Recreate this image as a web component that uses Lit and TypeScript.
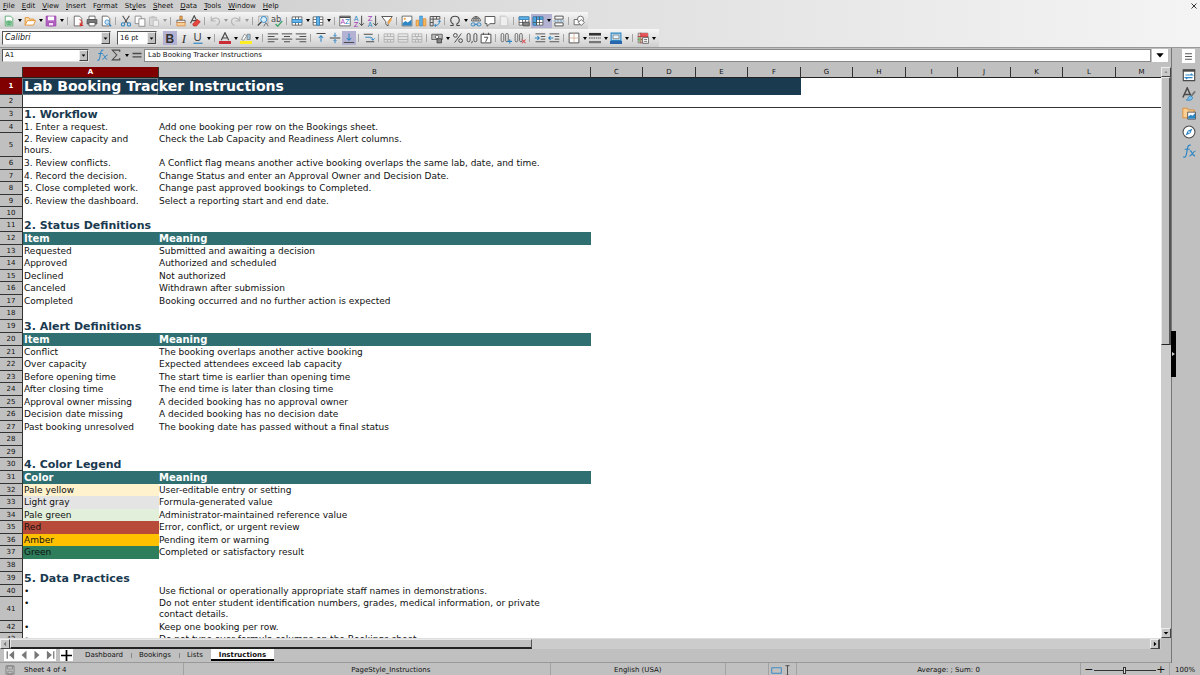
import { LitElement, html, svg, css, nothing } from "lit";
import { customElement, property, state } from "lit/decorators.js";
import { classMap } from "lit/directives/class-map.js";

const G = "#4a4a4a";
const B = "#2f86c4";

const sheetPage = svg`<path d="M3 1.5h7l3 3v10H3z" fill="#fff" stroke=${G}/>`;
const gridBase = svg`<path d="M1.5 2.5h13v11h-13z" fill="#fff" stroke=${G}/><path d="M1.5 6h13M1.5 10h13M6 2.5v11M10 2.5v11" stroke=${G} fill="none"/>`;
const mergeBase = svg`<path d="M1.5 2.5h13v11h-13zM1.5 6h13M1.5 10h13M6 2.5v3.5M10 2.5v3.5M6 10v3.5M10 10v3.5" fill="none" stroke="#a8a8a8"/>`;

const ICONS: Record<string, unknown> = {
  new: svg`<path d="M3 1.5h7l3 3v10H3z" fill="#fff" stroke="#3a9a56"/><path d="M5 8h6v5H5zM5 10.5h6M8 8v5" fill="#bfe5c9" stroke="#2f9a50"/>`,
  open: svg`<path d="M1.5 13.5v-10h5l1 2h5.500v2" fill="#fbe0b4" stroke="#e59434" stroke-width="1.3"/><path d="M1.500 13.500l3-6h11l-3 6z" fill="#fff" stroke="#e59434" stroke-width="1.300"/>`,
  save: svg`<path d="M1.500 1.500h13v13h-13z" fill="#b565c4" stroke="#9637a8"/><path d="M4 2h8v5H4z" fill="#fff"/><path d="M4.500 10h7v4.500h-7z" fill="#f3dff6" stroke="#9637a8"/>`,
  pdf: svg`${sheetPage}<path d="M10 6c4 1 5 6 1 8M11 10v4h4" fill="none" stroke="#d6352f" stroke-width="1.500"/>`,
  print: svg`<path d="M4 1.500h8v5H4z" fill="#fff" stroke=${G}/><path d="M1.500 6h13v6h-13z" fill="#777" stroke=${G}/><path d="M4 10h8v4.500H4z" fill="#fff" stroke=${G}/>`,
  preview: svg`${sheetPage}<circle cx="9.500" cy="9.500" r="3" fill="#cde6f7" stroke=${B}/><path d="M12 12l3 3" stroke=${B} stroke-width="1.500"/>`,
  cut: svg`<path d="M3.500 1l6.500 10M12.500 1L6 11" stroke=${G} stroke-width="1.400"/><circle cx="4" cy="12.500" r="2.200" fill="none" stroke=${B} stroke-width="1.400"/><circle cx="12" cy="12.500" r="2.200" fill="none" stroke=${B} stroke-width="1.400"/>`,
  copy: svg`<path d="M1.500 1.500h8v10h-8z" fill="#fff" stroke="#777"/><path d="M6.500 5h8v10h-8z" fill="#fff" stroke="#777"/>`,
  paste: svg`<path d="M2 3h9v11H2z" fill="#d8d8d8" stroke="#b0b0b0"/><path d="M4.500 1.500h4v3h-4z" fill="#c4c4c4"/><path d="M7 7h7v8H7z" fill="#eee" stroke="#b5b5b5"/>`,
  clone: svg`<path d="M6.500 1.500h3v5h-3z" fill="#f5b05c" stroke="#a8682c"/><path d="M2.500 7h11v3h-11z" fill="#eee" stroke=${G}/><path d="M2.500 10h11v4.500h-11z" fill="#f8cf9c" stroke="#d9873a"/>`,
  clear: svg`<path d="M2 11L7 1l4 8M4.500 7.500h5" fill="none" stroke=${G} stroke-width="1.500"/><path d="M5 12l6-6 4 3-5 5.500H6z" fill="#e8493f" stroke="#b52a22"/>`,
  undo: svg`<path d="M3 2v6h6M3 8c3-6 11-5 11 1 0 3-2 4-4 5" fill="none" stroke="#b4b4b4" stroke-width="1.500"/>`,
  redo: svg`<path d="M13 2v6H7M13 8C10 2 2 3 2 9c0 3 2 4 4 5" fill="none" stroke="#b4b4b4" stroke-width="1.500"/>`,
  find: svg`<path d="M2.500 10V1.500h12V12" fill="#fff" stroke="#888"/><circle cx="9" cy="6" r="4" fill="#d8ecfa" stroke=${B} stroke-width="1.300"/><path d="M6 9l-5 5" stroke=${G} stroke-width="2"/><path d="M9 15l3-5 3 5" fill="none" stroke=${G}/>`,
  spell: svg`<text x="0" y="9" font-size="11" font-family="DejaVu Sans" fill=${G}>ab</text><path d="M6 12l3 3 6-7" fill="none" stroke="#36a265" stroke-width="1.600"/>`,
  row: svg`${gridBase}<path d="M1.500 6h13v4h-13z" fill="#62b5ea" stroke=${B}/>`,
  col: svg`${gridBase}<path d="M6 2.500h4v11H6z" fill="#62b5ea" stroke=${B}/>`,
  sort: svg`<path d="M1 1.500h14v13H1z" fill="#fff" stroke=${G}/><path d="M1 3h14" stroke=${G} stroke-width="2"/><text x="2" y="12.500" font-size="9" font-family="DejaVu Sans" fill="#a33bb5">A</text><text x="8" y="12.500" font-size="9" font-family="DejaVu Sans" fill=${B}>Z</text>`,
  asc: svg`<text x="1" y="7.500" font-size="9" font-family="DejaVu Sans" fill=${B}>A</text><text x="1" y="15.500" font-size="9" font-family="DejaVu Sans" fill="#a33bb5">Z</text><path d="M11.500 1v13M8.500 11l3 3 3-3" fill="none" stroke=${G} stroke-width="1.300"/>`,
  desc: svg`<text x="1" y="7.500" font-size="9" font-family="DejaVu Sans" fill="#a33bb5">Z</text><text x="1" y="15.500" font-size="9" font-family="DejaVu Sans" fill=${B}>A</text><path d="M11.500 1v13M8.500 11l3 3 3-3" fill="none" stroke=${G} stroke-width="1.300"/>`,
  filter: svg`<path d="M1 2h14L9.500 9v5.500l-3-2V9z" fill="#fff" stroke=${G} stroke-width="1.200"/><path d="M9 9l5-6v4l-4 6z" fill="#f2a44b"/>`,
  image: svg`<path d="M1.500 1.500h13v13h-13z" fill="#fff" stroke=${G}/><path d="M2 14v-3l4-3 3 2 5-4v8z" fill=${B}/><circle cx="5" cy="5" r="1.500" fill="#f2a44b"/>`,
  chart: svg`<path d="M1.500 7h3.500v7.500H1.500z" fill="#f5b862" stroke="#e08a2a"/><path d="M6.300 1.500h3.500v13H6.300z" fill="#62b5ea" stroke=${B}/><path d="M11 5h3.500v9.500H11z" fill="#f5b862" stroke="#e08a2a"/>`,
  pivot: svg`<path d="M1.500 2h13M1.500 5.500h13M1.500 2v12.500h4V2M10 2v3.500M14.500 2v3.500M1.500 10h4" fill="none" stroke=${G} stroke-width="1.200"/><path d="M8 14c4 0 6-2 6-6M12 9l2-2 1.500 2M9 12l-2 2 2 1.500" fill="none" stroke=${B} stroke-width="1.300"/>`,
  omega: svg`<path d="M1.500 14h4v-2C0 8 2 1.800 8 1.800S16 8 10.500 12v2h4" fill="none" stroke=${G} stroke-width="1.400"/>`,
  link: svg`<path d="M2 8a6 6 0 0 1 12 0zM8 2v6M5 8c0-3 1-5 3-6 2 1 3 3 3 6M3 5h10" fill="none" stroke=${G}/><rect x="1.500" y="10.500" width="5.500" height="4" rx="2" fill="none" stroke=${B} stroke-width="1.300"/><rect x="9" y="10.500" width="5.500" height="4" rx="2" fill="none" stroke=${B} stroke-width="1.300"/><path d="M5 12.500h6" stroke=${B}/>`,
  comment: svg`<path d="M1.500 2h13v9.500H8L4 15v-3.500H1.500z" fill="#fff" stroke=${G} stroke-width="1.200"/>`,
  header: svg`<path d="M3 1.500h7l3 3v10H3z" fill="#eee" stroke="#bbb"/>`,
  area: svg`${gridBase}<path d="M1.500 2.500h13V6h-13z" fill="#62b5ea" stroke=${B}/><path d="M7 9.500h8v5H7z" fill="#888" stroke=${G}/>`,
  freeze: svg`${gridBase}<path d="M1.500 2.500h13V6H6v7.500H1.500z" fill="#4fa7e2" stroke=${B}/><path d="M6 2.500v11M10 2.500v4M1.500 10H6" stroke=${G}/>`,
  split: svg`<path d="M2.500 1.500h11v4h-11zM2.500 10.500h11v4h-11z" fill="#fff" stroke=${G} stroke-width="1.200"/><path d="M1 8h14" stroke=${B} stroke-dasharray="3 1"/>`,
  shapes: svg`<path d="M1.500 6h7v7h-7z" fill="#fff" stroke=${G}/><circle cx="10" cy="5.500" r="4" fill="#fff" stroke=${G}/><path d="M11 6l4 4-4 4-4-4z" fill="#fff" stroke=${G}/>`,
  bold: svg`<text x="2" y="14" font-size="16" font-weight="bold" font-family="Liberation Sans" fill="#333">B</text>`,
  italic: svg`<text x="5" y="14" font-size="17" font-style="italic" font-family="Liberation Serif" fill="#333">I</text>`,
  underline: svg`<text x="2" y="12" font-size="15" font-family="Liberation Sans" fill="#444">U</text><path d="M2 15h12" stroke=${B} stroke-width="1.600"/>`,
  color: svg`<path d="M3 11L8 1l5 10M5 8h6" fill="none" stroke=${G} stroke-width="1.600"/><path d="M0 12h16v4H0z" fill="#c92d35"/>`,
  highlight: svg`<path d="M2 10l4-7 3 2-4 6z" fill="#fff" stroke="#777"/><path d="M9.500 3h4v7h-4z" fill="#9cc6e2" stroke="#777"/><path d="M0 12h16v4H0z" fill="#ffee22"/>`,
  left: svg`<path d="M1 2.500h14M1 6h9M1 9.500h14M1 13h9" stroke=${G} stroke-width="1.300"/>`,
  center: svg`<path d="M1 2.500h14M4 6h8M1 9.500h14M4 13h8" stroke=${G} stroke-width="1.300"/>`,
  right: svg`<path d="M1 2.500h14M6 6h9M1 9.500h14M6 13h9" stroke=${G} stroke-width="1.300"/>`,
  top: svg`<path d="M2 2h12" stroke=${G} stroke-width="1.400"/><path d="M8 13V5M5 8l3-3 3 3" fill="none" stroke=${B} stroke-width="1.400"/>`,
  middle: svg`<path d="M1 8h14" stroke=${G} stroke-width="1.400"/><path d="M8 1v5M6 4l2 2 2-2M8 15v-5M6 12l2-2 2 2" fill="none" stroke=${B} stroke-width="1.300"/>`,
  bottom: svg`<path d="M1 14h14" stroke=${G} stroke-width="1.400"/><path d="M8 2v9M5 8l3 3 3-3" fill="none" stroke=${B} stroke-width="1.400"/>`,
  wrap: svg`<path d="M1 3h12M4 13h11" stroke=${G} stroke-width="1.300"/><path d="M3 7h7c3 0 3 3 3 4M10.500 8.500L13 11l2.500-2.500" fill="none" stroke=${B} stroke-width="1.300"/>`,
  merge1: mergeBase,
  merge2: svg`<path d="M1.500 2.500h13v11h-13zM1.500 6h13M1.500 10h13" fill="none" stroke="#a8a8a8"/>`,
  merge3: svg`${mergeBase}<path d="M8 6v4" stroke="#a8a8a8"/>`,
  currency: svg`<path d="M1 3h14v7H1z" fill="#bbb" stroke=${G}/><circle cx="8" cy="6.500" r="2.300" fill="#fff" stroke=${G}/><path d="M8 9h6v5.500H8z" fill="#888" stroke="#333"/>`,
  percent: svg`<circle cx="4.500" cy="4.500" r="2.500" fill="none" stroke=${G} stroke-width="1.300"/><circle cx="11.500" cy="11.500" r="2.500" fill="none" stroke=${G} stroke-width="1.300"/><path d="M12.500 2l-9 12" stroke=${G} stroke-width="1.300"/>`,
  number: svg`<rect x="1.500" y="2" width="4" height="11" rx="2" fill="none" stroke=${G} stroke-width="1.200"/><rect x="10.500" y="2" width="4" height="11" rx="2" fill="none" stroke=${G} stroke-width="1.200"/><path d="M8.500 12l-1 3" stroke=${G} stroke-width="1.300"/>`,
  date: svg`<path d="M1.500 3h13v11.500h-13zM4.500 1v3M11.500 1v3" fill="#fff" stroke=${G} stroke-width="1.300"/><path d="M5.500 7h5l-3 6" fill="none" stroke=${G} stroke-width="1.300"/>`,
  addDec: svg`<rect x="1.500" y="2" width="3.500" height="11" rx="1.700" fill="none" stroke=${G}/><rect x="7.500" y="2" width="3.500" height="11" rx="1.700" fill="none" stroke=${G}/><path d="M10 12.500h6M13 9.500v6" stroke=${B} stroke-width="1.400"/>`,
  delDec: svg`<rect x="1.500" y="2" width="3.500" height="11" rx="1.700" fill="none" stroke=${G}/><rect x="7.500" y="2" width="3.500" height="11" rx="1.700" fill="none" stroke=${G}/><path d="M10.500 10l5 5M15.500 10l-5 5" stroke="#d8454d" stroke-width="1.400"/>`,
  indent: svg`<path d="M2 2.500h13M9 6h6M9 9.500h6M2 13h13" stroke=${G} stroke-width="1.200"/><path d="M1 8h6M4.500 5.500L7 8l-2.500 2.500" fill="none" stroke=${B} stroke-width="1.400"/>`,
  outdent: svg`<path d="M2 2.500h13M9 6h6M9 9.500h6M2 13h13" stroke=${G} stroke-width="1.200"/><path d="M7 8H1M3.500 5.500L1 8l2.500 2.500" fill="none" stroke=${B} stroke-width="1.400"/>`,
  borders: svg`<path d="M1.500 1.500h13v13h-13z" fill="#fff" stroke=${G} stroke-width="1.200"/><path d="M8 1.500v13M1.500 8h13" stroke="#c9a58c"/>`,
  lines: svg`<path d="M0 3h16" stroke="#333" stroke-width="3.500"/><path d="M0 8h16" stroke=${G} stroke-width="1.600" stroke-dasharray="2 1"/><path d="M0 13.500h16" stroke="#777" stroke-width="3"/>`,
  borderColor: svg`<path d="M1.500 1.500h13v10h-13z" fill="#b9dff7" stroke=${B} stroke-width="1.500"/><path d="M4 4h8v5H4z" fill="#e6f3fb" stroke="#777"/><path d="M0 12h16v4H0z" fill="#2a66ac"/>`,
  cond: svg`<path d="M1.500 1.500h13v13h-13z" fill="#f0b8b8" stroke="#777"/><path d="M5 1.500h9.500V6H5z" fill="#ea5158"/><path d="M5 1v14M1 6h14M1 10h6" stroke="#a33"/><path d="M2 7h3v6H2z" fill="#7ac07a"/><path d="M7.500 7.500h8v7.500h-8z" fill="#fff" stroke=${G}/><path d="M9.500 10h4M9.500 12.500h4" stroke=${G}/>`,
  fx: svg`<path d="M10 1.500C7.500.5 6.500 3 6 6L5 12c-.500 3-2 3.500-3.500 2.500M3 6h6" fill="none" stroke=${B} stroke-width="1.400"/><path d="M9 8c3-1 2 6 6 5.500M15.500 8c-3 0-4 6-7 5.500" fill="none" stroke=${B} stroke-width="1.300"/>`,
  sigma: svg`<path d="M13 4V1.500H3L9 8l-6 6.500h10V12" fill="none" stroke=${G} stroke-width="1.400"/>`,
  equals: svg`<path d="M2 6h12M2 10.500h12" stroke=${G} stroke-width="1.800"/>`,
  menu: svg`<path d="M3 4h10M3 8h10M3 12h10" stroke="#444" stroke-width="1.300"/>`,
  props: svg`<path d="M1.500 2h13v12.500h-13z" fill="#fff" stroke=${G} stroke-width="1.300"/><path d="M1 3h14" stroke=${G} stroke-width="2.500"/><path d="M4 8h8l-2-1.500M12 11H4l2 1.500" fill="none" stroke=${B} stroke-width="1.300"/>`,
  styles: svg`<path d="M1 12L6 1l5 11M3 8.500h6" fill="none" stroke=${G} stroke-width="1.700"/><path d="M15 5l-5 6" stroke="#777" stroke-width="2"/><path d="M10 10c-3 0-2 3-5 5 4 .500 7 0 7-3z" fill="#7cc0ee" stroke=${B}/>`,
  gallery: svg`<path d="M1 13.500v-11h5l1 2h7v9z" fill="#f9cf94" stroke="#e08a2a"/><path d="M6.500 7h9v8h-9z" fill="#fff" stroke=${G}/><path d="M7 14.500V12l3-2 2 1 3-3v6.500z" fill=${B}/>`,
  navigator: svg`<circle cx="8" cy="8" r="6.800" fill="#fff" stroke=${G} stroke-width="1.200"/><path d="M12 4l-2.500 5.500L4 12l2.500-5.500z" fill=${B}/><circle cx="8" cy="8" r="1" fill="#fff"/>`,
  disk: svg`<path d="M1.500 1.500h13v13h-13z" fill="none" stroke="#777" stroke-width="1.300"/><path d="M4 1.500h8v5H4zM4.500 10h7v4.500h-7z" fill="none" stroke="#777"/>`,
  first: svg`<path d="M2 2v12" stroke="#777" stroke-width="2"/><path d="M13 1v14L5 8z" fill="#777"/>`,
  prev: svg`<path d="M12 1v14L4 8z" fill="#777"/>`,
  next: svg`<path d="M4 1v14l8-7z" fill="#777"/>`,
  last: svg`<path d="M14 2v12" stroke="#777" stroke-width="2"/><path d="M3 1v14l8-7z" fill="#777"/>`,
  plus: svg`<path d="M8 0v16M0 8h16" stroke="#000" stroke-width="2.500"/>`,
  down: svg`<path d="M2 5h12l-6 7z" fill="#000"/>`,
  up: svg`<path d="M4 10h8l-4-5z" fill="#777"/>`,
  close: svg`<path d="M3 3l10 10M13 3L3 13" stroke="#333" stroke-width="2"/>`,
  select: svg`<path d="M1 4h14v8H1z" fill="none" stroke=${B} stroke-width="1.300"/>`,
  caret: svg`<path d="M5 1h6M5 15h6M8 1v14" stroke=${G} stroke-width="1.400"/>`,
};

const FONT = css`"DejaVu Sans", "Liberation Sans", sans-serif`;

@customElement("ui-icon")
class UiIcon extends LitElement {
  static styles = css`
    :host { display: inline-flex; width: 12px; height: 12px; flex: none; }
    svg { width: 100%; height: 100%; display: block; }
  `;
  @property() name = "";
  render() {
    return html`<svg viewBox="0 0 16 16" aria-hidden="true">${ICONS[this.name]}</svg>`;
  }
}

/* Toolbar notation: "name" is a button, "name+" has a menu arrow,
   "name*" is pressed, "name-" is disabled and "|" is a separator. */
@customElement("tool-strip")
class ToolStrip extends LitElement {
  static styles = css`
    :host { display: flex; align-items: center; }
    button { border: 0; padding: 0; margin: 0; background: none; height: 14px; width: 14px; display: flex; align-items: center; justify-content: center; }
    button.on { background: #b4b2d2; }
    button.arrow { width: 7px; }
    .tri { border: 2px solid transparent; border-top: 3px solid #000; border-bottom: 0; }
    .off .tri { border-top-color: #999; }
    .sep { width: 1px; height: 8px; margin: 0 3px 0 2px; background: #a4a4a4; flex: none; }
  `;
  @property() items = "";
  render() {
    return this.items.split(" ").map((raw) => {
      if (raw === "|") return html`<span class="sep"></span>`;
      const name = raw.replace(/[+*-]/g, "");
      const cls = { on: raw.includes("*"), off: raw.includes("-") };
      return html`<button class=${classMap(cls)} aria-label=${name}><ui-icon name=${name}></ui-icon></button>${raw.includes("+")
        ? html`<button class=${classMap({ arrow: true, ...cls })} aria-label="${name} menu"><span class="tri"></span></button>`
        : nothing}`;
    });
  }
}

type Row = { h: number; kind?: string; a?: string; b?: string; fill?: string };
const t = (h: number, a = "", b = ""): Row => ({ h, a, b });
const head = (h: number, a: string): Row => ({ h, a, kind: "section" });
const band = (h: number, a: string): Row => ({ h, a, b: "Meaning", kind: "band" });
const swatch = (h: number, fill: string, a: string, b: string): Row => ({ h, a, b, fill });

const ROWS: Row[] = [
  { h: 17, kind: "title", a: "Lab Booking Tracker Instructions" },
  { h: 13, kind: "frozen" },
  head(13, "1. Workflow"),
  t(12, "1. Enter a request.", "Add one booking per row on the Bookings sheet."),
  t(24, "2. Review capacity and hours.", "Check the Lab Capacity and Readiness Alert columns."),
  t(13, "3. Review conflicts.", "A Conflict flag means another active booking overlaps the same lab, date, and time."),
  t(12, "4. Record the decision.", "Change Status and enter an Approval Owner and Decision Date."),
  t(13, "5. Close completed work.", "Change past approved bookings to Completed."),
  t(12, "6. Review the dashboard.", "Select a reporting start and end date."),
  t(12),
  head(13, "2. Status Definitions"),
  band(13, "Item"),
  t(12, "Requested", "Submitted and awaiting a decision"),
  t(13, "Approved", "Authorized and scheduled"),
  t(12, "Declined", "Not authorized"),
  t(13, "Canceled", "Withdrawn after submission"),
  t(12, "Completed", "Booking occurred and no further action is expected"),
  t(13),
  head(13, "3. Alert Definitions"),
  band(13, "Item"),
  t(12, "Conflict", "The booking overlaps another active booking"),
  t(13, "Over capacity", "Expected attendees exceed lab capacity"),
  t(12, "Before opening time", "The start time is earlier than opening time"),
  t(13, "After closing time", "The end time is later than closing time"),
  t(12, "Approval owner missing", "A decided booking has no approval owner"),
  t(13, "Decision date missing", "A decided booking has no decision date"),
  t(12, "Past booking unresolved", "The booking date has passed without a final status"),
  t(13),
  t(12),
  head(13, "4. Color Legend"),
  band(13, "Color"),
  swatch(12, "#fff2cc", "Pale yellow", "User-editable entry or setting"),
  swatch(13, "#e4e4e4", "Light gray", "Formula-generated value"),
  swatch(12, "#e2efda", "Pale green", "Administrator-maintained reference value"),
  swatch(13, "#b84a3a", "Red", "Error, conflict, or urgent review"),
  swatch(12, "#ffc000", "Amber", "Pending item or warning"),
  swatch(13, "#2e7d5b", "Green", "Completed or satisfactory result"),
  t(13),
  head(13, "5. Data Practices"),
  t(12, "•", "Use fictional or operationally appropriate staff names in demonstrations."),
  t(24, "•", "Do not enter student identification numbers, grades, medical information, or private contact details."),
  t(12, "•", "Keep one booking per row."),
  t(13, "•", "Do not type over formula columns on the Bookings sheet."),
];
const COLS: [string, number][] = [
  ["A", 136], ["B", 432], ["C", 52], ["D", 53], ["E", 52], ["F", 53], ["G", 52],
  ["H", 53], ["I", 52], ["J", 53], ["K", 52], ["L", 53], ["M", 52],
];
const WIDTH = 23 + COLS.reduce((sum, c) => sum + c[1], 0);

@customElement("sheet-grid")
class SheetGrid extends LitElement {
  static styles = css`
    :host { display: block; overflow: hidden; background: #fff; font: 9px/13px ${FONT}; color: #111; }
    table { table-layout: fixed; border-collapse: separate; border-spacing: 0; }
    .corner { width: 23px; }
    th, td { padding: 0; box-sizing: border-box; }
    td { vertical-align: top; text-align: left; line-height: 12px; }
    .text { overflow: visible; }
    .a, .wide { padding-left: 1px; }
    .wide { white-space: nowrap; }
    .a { padding-right: 8px; }
    .b { padding-right: 24px; }
    .text.tall { line-height: 11px; padding-top: 1px; }
    thead th { height: 11px; background: #c0c0c0; border-bottom: 1px solid #222; border-right: 1px solid #333; font: 7px/10px ${FONT}; }
    tbody th { background: #c0c0c0; border-bottom: 1px solid #333; border-right: 1px solid #333; font: 7px/10px ${FONT}; vertical-align: middle; }
    thead th.active, tbody th.active { background: #800000; color: #fff; font-weight: bold; }
    .title td.fill { background: #1a3a50; color: #fff; font-weight: bold; font-size: 14px; line-height: 15px; }
    .cursor { display: block; box-sizing: border-box; width: 136px; height: 17px; margin-left: -1px; padding-left: 1px; border: 1px solid #6d7880; white-space: nowrap; }
    .frozen td { border-bottom: 1px solid #333; }
    .section td { color: #1a3a50; font-weight: bold; font-size: 11px; line-height: 13px; }
    .band .fill { background: #2f6f72; color: #fff; font-weight: bold; font-size: 10px; line-height: 13px; }
  `;

  private cells(r: Row) {
    const rest = (span: number) => html`<td colspan=${span}></td>`;
    if (r.kind === "title")
      return html`<td class="fill" colspan="6"><span class="cursor">${r.a}</span></td>${rest(7)}`;
    if (r.kind === "frozen") return rest(13);
    if (r.kind === "section") return html`<td class="text wide" colspan="2">${r.a}</td>${rest(11)}`;
    const cls = { text: true, fill: r.kind === "band", tall: r.h > 20 };
    return html`<td class=${classMap({ ...cls, a: true })} style=${r.fill ? `background:${r.fill}` : nothing}>${r.a}</td>
      <td class=${classMap({ ...cls, b: true })}>${r.b}</td>${rest(11)}`;
  }

  render() {
    return html`<table style="width:${WIDTH}px">
      <colgroup><col class="corner" />${COLS.map((c) => html`<col style="width:${c[1]}px" />`)}</colgroup>
      <thead><tr><th></th>${COLS.map((c) => html`<th scope="col" class=${c[0] === "A" ? "active" : ""}>${c[0]}</th>`)}</tr></thead>
      <tbody>${ROWS.map((r, i) => html`<tr class=${r.kind ?? ""} style="height:${r.h}px">
        <th scope="row" class=${i === 0 ? "active" : ""}>${i + 1}</th>${this.cells(r)}</tr>`)}</tbody>
    </table>`;
  }
}

const MENUS: [string, string, string][] = [
  ["", "F", "ile"], ["", "E", "dit"], ["", "V", "iew"], ["", "I", "nsert"], ["F", "o", "rmat"], ["St", "y", "les"],
  ["", "S", "heet"], ["", "D", "ata"], ["", "T", "ools"], ["", "W", "indow"], ["", "H", "elp"],
];

@customElement("app-root")
class AppRoot extends LitElement {
  static styles = css`
    :host { display: flex; flex-direction: column; height: 100vh; overflow: hidden; background: #c0c0c0; font: 7px/10px ${FONT}; color: #111; }
    button, input, select { font: inherit; color: inherit; margin: 0; padding: 0; border: 0; border-radius: 0; background: none; box-sizing: border-box; outline: 0; }
    .top { background: linear-gradient(90deg, #c6c6c6, #dedede 45%, #ececec 80%, #f4f4f4); border-bottom: 1px solid #999; }
    .menus { display: flex; align-items: center; height: 12px; }
    .menus button { padding: 0 4px 0 3px; }
    .menus .close { margin-left: auto; display: flex; padding: 0 2px; }
    .close ui-icon { width: 8px; height: 8px; }
    .bar { display: flex; align-items: center; width: max-content; background: linear-gradient(#f6f6f6, #cfcfcf); }
    .main-tools { height: 17px; padding: 0 2px; }
    .format-tools { height: 18px; padding: 0 2px; gap: 6px; }
    .box { display: flex; align-items: center; height: 14px; background: #fff; border: 1px solid #555; border-right-color: #ddd; border-bottom-color: #ddd; box-sizing: border-box; }
    .box input, .box select { flex: 1; min-width: 0; width: 100%; height: 100%; padding: 0 2px; appearance: none; }
    .drop { display: flex; align-items: center; justify-content: center; flex: none; width: 9px; height: 100%; box-sizing: border-box; background: #c0c0c0; border: 1px solid #eee; border-right-color: #444; border-bottom-color: #444; pointer-events: none; }
    .drop ui-icon { width: 5px; height: 5px; }
    .font-name { width: 109px; font-size: 8px; font-style: italic; }
    .font-size { width: 40px; }
    .work { display: flex; flex: 1; min-height: 0; }
    .doc { flex: 1; min-width: 0; display: flex; flex-direction: column; border-right: 1px solid #777; }
    .formula { display: flex; align-items: center; height: 14px; padding: 0 3px 5px 2px; flex: none; }
    .name-box { width: 87px; height: 13px; margin-right: 6px; }
    .fx-input { flex: 1; height: 13px; padding: 0 3px; background: #fff; border: 1px solid #888; }
    .expand { width: 16px; height: 13px; background: #fff; margin-left: 1px; display: flex; align-items: center; justify-content: center; }
    .expand ui-icon { width: 10px; height: 10px; }
    .sheet { flex: 1; min-height: 0; display: flex; }
    sheet-grid { flex: 1; min-width: 0; }
    .vscroll { width: 10px; display: flex; flex-direction: column; background: #ccc; flex: none; }
    .thumb { box-sizing: border-box; background: #c0c0c0; border: 1px solid #e8e8e8; border-right: 2px solid #555; border-bottom: 1px solid #222; }
    .vscroll .thumb { height: 47%; }
    .step { display: flex; align-items: center; justify-content: center; background: #c8c8c8; border: 1px solid #eee; border-right-color: #444; border-bottom-color: #444; width: 10px; height: 10px; flex: none; }
    .step ui-icon { width: 6px; height: 6px; }
    .left ui-icon { transform: rotate(90deg); opacity: 0.4; }
    .right ui-icon { transform: rotate(-90deg); }
    .push { margin-top: auto; }
    .hscroll { display: flex; height: 10px; background: #ccc; margin-right: 10px; flex: none; border-top: 1px solid #ddd; }
    .hscroll .thumb { width: 45%; border-right-width: 1px; border-bottom-width: 2px; }
    .hscroll .right { margin-left: auto; margin-right: 1px; border-right-width: 2px; }
    .tabs { display: flex; align-items: stretch; height: 13px; flex: none; padding-left: 4px; border-bottom: 1px solid #999; }
    .nav { display: flex; height: 12px; background: #fff; margin-right: 4px; }
    .nav button, .add { width: 13px; display: flex; align-items: center; justify-content: center; }
    .nav ui-icon { width: 10px; height: 10px; }
    .add { background: #fff; height: 12px; margin-right: 4px; }
    .add ui-icon { width: 11px; height: 11px; }
    .tab { padding: 0 8px; height: 12px; position: relative; }
    .tab + .tab::before { content: ""; position: absolute; left: 0; top: 4px; height: 5px; border-left: 1px solid #888; }
    .tab.on { background: #fff; font-weight: bold; box-shadow: inset 0 -2px #000; }
    .tab.on::before { display: none; }
    .side { position: relative; width: 28px; flex: none; display: flex; flex-direction: column; align-items: center; gap: 5px; padding: 1px 0 0 5px; box-sizing: border-box; }
    .side button { display: flex; align-items: center; justify-content: center; width: 14px; height: 14px; }
    .side button:first-child { background: #fff; width: 13px; }
    .side ui-icon { width: 14px; height: 14px; }
    .side button:first-child ui-icon { width: 11px; height: 11px; }
    .handle { position: absolute; left: -1px; top: 46%; width: 5px; height: 46px; background: #000; display: flex; align-items: center; }
    .handle::after { content: ""; margin-left: 1px; border: 2px solid transparent; border-left: 3px solid #ccc; border-right: 0; }
    .status { display: flex; align-items: center; height: 12px; flex: none; }
    .status > * { box-sizing: border-box; border-right: 1px solid #a2a2a2; height: 12px; padding-top: 2px; display: flex; align-items: center; justify-content: center; }
    .status .s-sheet { justify-content: flex-start; gap: 9px; }
    .s-sheet ui-icon { width: 10px; height: 10px; margin-left: 5px; }
    .s-sheet { flex: 184; } .s-style { flex: 368; } .s-lang { flex: 175; } .s-ins { flex: 42; } .s-sel { flex: 28; } .s-sum { flex: 284; } .s-zoom { flex: 89; }
    .s-style span { margin-left: 48px; }
    .s-sum span { margin-left: 20px; }
    .status .s-pct { flex: 30; border: 0; }
    .s-zoom button { width: 10px; font-size: 11px; }
    .s-sel ui-icon { width: 11px; height: 11px; }
    .s-zoom input { flex: none; width: 62px; height: 10px; appearance: none; background: linear-gradient(#333, #333) center / 100% 1px no-repeat; }
    .s-zoom input::-webkit-slider-thumb { appearance: none; width: 3px; height: 7px; background: #ddd; border: 1px solid #333; box-sizing: border-box; }
  `;

  @state() private tab = "Instructions";

  render() {
    return html`
      <div class="top">
        <nav class="menus">
          ${MENUS.map(([a, b, c]) => html`<button>${a}<u>${b}</u>${c}</button>`)}
          <button class="close" aria-label="Close"><ui-icon name="close"></ui-icon></button>
        </nav>
        <div class="bar main-tools">
          <tool-strip items="new+ open+ save+ | pdf print preview | cut copy paste+- | clone clear | undo+- redo+- | find spell | row+ col+ | sort asc desc filter | image chart pivot | omega+ link comment header- | area freeze*+ split | shapes"></tool-strip>
        </div>
        <div class="bar format-tools">
          <div class="box font-name"><select aria-label="Font name"><option>Calibri</option></select><span class="drop"><ui-icon name="down"></ui-icon></span></div>
          <div class="box font-size"><select aria-label="Font size"><option>16 pt</option></select><span class="drop"><ui-icon name="down"></ui-icon></span></div>
          <tool-strip items="bold* italic underline+ | color+ highlight+ | left center right | top middle bottom* | wrap | merge1 merge2 merge3 | currency+ percent number date | addDec delDec | indent outdent | borders+ lines+ borderColor+ | cond+"></tool-strip>
        </div>
      </div>
      <div class="work">
        <div class="doc">
          <div class="formula">
            <div class="box name-box"><input aria-label="Name box" value="A1" /><span class="drop"><ui-icon name="down"></ui-icon></span></div>
            <tool-strip items="fx sigma+ equals"></tool-strip>
            <input class="fx-input" aria-label="Formula" value="Lab Booking Tracker Instructions" />
            <button class="expand" aria-label="Expand formula bar"><ui-icon name="down"></ui-icon></button>
          </div>
          <div class="sheet">
            <sheet-grid></sheet-grid>
            <div class="vscroll">
              <button class="step" aria-label="Scroll up"><ui-icon name="up"></ui-icon></button>
              <div class="thumb"></div>
              <button class="step push" aria-label="Scroll down"><ui-icon name="down"></ui-icon></button>
            </div>
          </div>
          <div class="hscroll">
            <button class="step left" aria-label="Scroll left"><ui-icon name="down"></ui-icon></button>
            <div class="thumb"></div>
            <button class="step right" aria-label="Scroll right"><ui-icon name="down"></ui-icon></button>
          </div>
          <div class="tabs">
            <div class="nav">${["first", "prev", "next", "last"].map((n) => html`<button aria-label="${n} sheet"><ui-icon name=${n}></ui-icon></button>`)}</div>
            <button class="add" aria-label="Add sheet"><ui-icon name="plus"></ui-icon></button>
            ${["Dashboard", "Bookings", "Lists", "Instructions"].map((n) => html`<button class=${classMap({ tab: true, on: n === this.tab })} @click=${() => (this.tab = n)}>${n}</button>`)}
          </div>
        </div>
        <aside class="side">
          ${["menu", "props", "styles", "gallery", "navigator", "fx"].map((n) => html`<button aria-label=${n}><ui-icon name=${n}></ui-icon></button>`)}
          <div class="handle"></div>
        </aside>
      </div>
      <footer class="status">
        <span class="s-sheet"><ui-icon name="disk"></ui-icon>Sheet 4 of 4</span>
        <span class="s-style"><span>PageStyle_Instructions</span></span>
        <span class="s-lang">English (USA)</span>
        <span class="s-ins"></span>
        <span class="s-sel"><ui-icon name="select"></ui-icon><ui-icon name="caret"></ui-icon></span>
        <span class="s-sum"><span>Average: ; Sum: 0</span></span>
        <span class="s-zoom"><button aria-label="Zoom out">−</button><input type="range" aria-label="Zoom" min="0" max="100" value="50" /><button aria-label="Zoom in">+</button></span>
        <span class="s-pct">100%</span>
      </footer>`;
  }
}
